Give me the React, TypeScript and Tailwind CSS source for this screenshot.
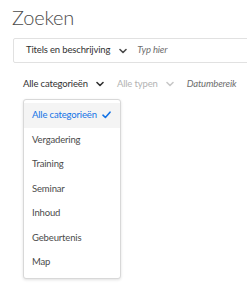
import React from 'react';

const Chevron: React.FC<{ className?: string }> = ({ className }) => (
  <svg width="8" height="6" viewBox="0 0 8 6" className={className} fill="none">
    <path d="M1 1.5 L4 4.5 L7 1.5" stroke="currentColor" strokeWidth="1.6" strokeLinecap="round" strokeLinejoin="round" />
  </svg>
);

const categories = ['Alle categorieën', 'Vergadering', 'Training', 'Seminar', 'Inhoud', 'Gebeurtenis', 'Map'];

export default function App() {
  return (
    <div className="w-[247px] h-[287px] overflow-hidden bg-white font-['Lato',sans-serif] text-[#323232] whitespace-nowrap">
      <div className="pl-[12px] pt-[5px]">
        <h1 className="text-[20px] font-light leading-[24px] text-[#4b4b4b] tracking-[-0.2px]">Zoeken</h1>

        <div className="mt-[9px] ml-[1px] w-[260px] h-[25px] flex items-center border border-[#e1e1e1] rounded-[2px] pl-[12px] text-[9.5px] tracking-[-0.15px]">
          <span className="text-[#323232]">Titels en beschrijving</span>
          <Chevron className="ml-[9px] text-[#4b4b4b]" />
          <span className="ml-[10px] italic text-[#6e6e6e]">Typ hier</span>
        </div>

        <div className="mt-[13px] ml-[11px] flex items-center h-[16px] text-[9.5px] tracking-[-0.15px]">
          <span>Alle categorieën</span>
          <Chevron className="ml-[8px] text-[#323232]" />
          <span className="ml-[13px] text-[#b3b3b3]">Alle typen</span>
          <Chevron className="ml-[8px] text-[#c8c8c8]" />
          <span className="ml-[13px] italic text-[#6e6e6e]">Datumbereik</span>
        </div>

        <div className="mt-[7px] ml-[11px] w-[98px] border border-[#d8d8d8] rounded-[3px] shadow-[0_1px_3px_rgba(0,0,0,0.12)] bg-white py-[3px] text-[9.5px] tracking-[-0.15px]">
          {categories.map((c, i) => (
            <div
              key={c}
              className={
                i === 0
                  ? 'h-[24.5px] flex items-center justify-between pl-[8px] pr-[9px] bg-[#f4f4f4] text-[#1473e6]'
                  : 'h-[24.5px] flex items-center pl-[8px] text-[#4b4b4b]'
              }
            >
              <span>{c}</span>
              {i === 0 && (
                <svg width="9" height="8" viewBox="0 0 9 8" fill="none">
                  <path d="M1 4.2 L3.4 6.5 L8 1.2" stroke="#1473e6" strokeWidth="1.6" strokeLinecap="round" strokeLinejoin="round" />
                </svg>
              )}
            </div>
          ))}
        </div>
      </div>
    </div>
  );
}
